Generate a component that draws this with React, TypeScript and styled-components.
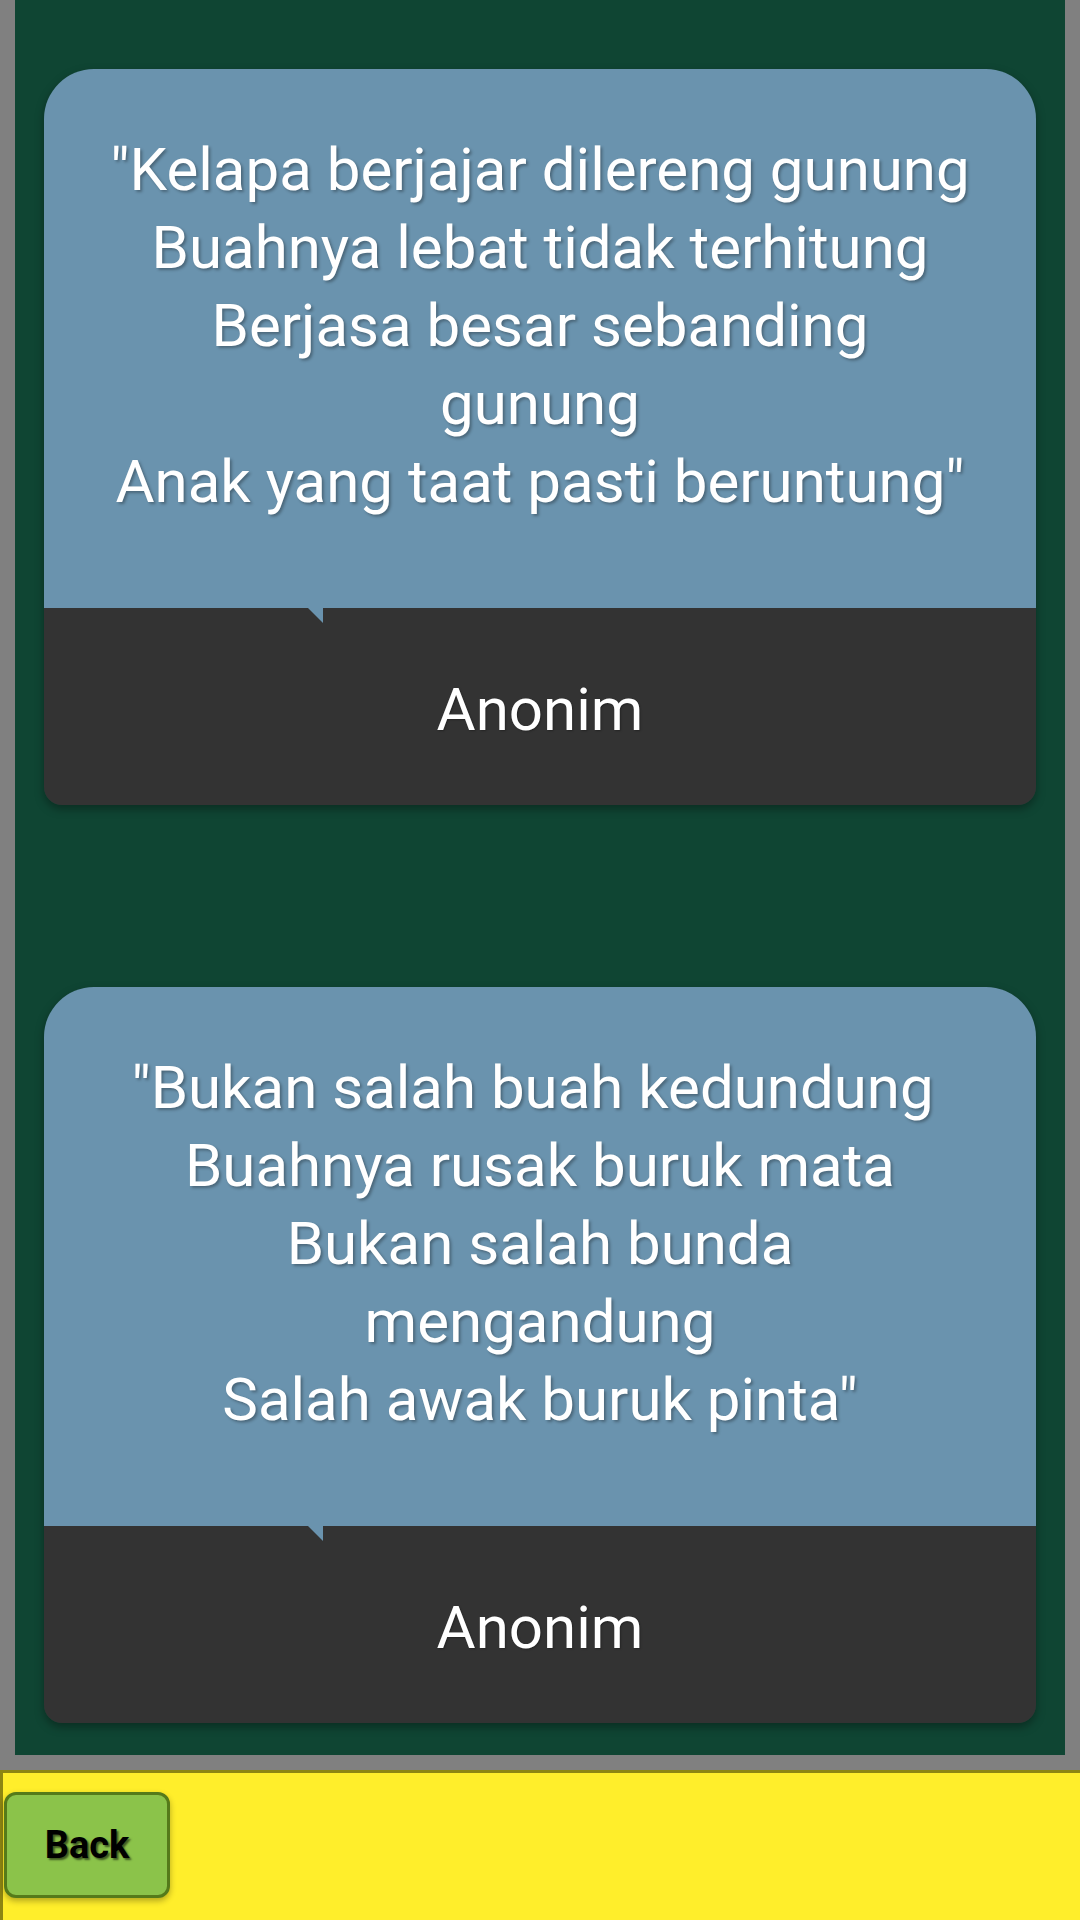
import styled, { createGlobalStyle } from "styled-components";

const GlobalStyle = createGlobalStyle`
  html, body {
    margin: 0;
    padding: 0;
    background: #808080;
    font-family: Roboto, "Liberation Sans", sans-serif;
  }
`;

const Page = styled.div`
  display: flex;
  flex-direction: column;
  width: 1080px;
  min-height: 1920px;
`;

const Panel = styled.div`
  margin: 0 15px;
  height: 1755px;
  box-sizing: border-box;
  background: #0f4533;
  padding: 69px 29px 31px;
  display: flex;
  flex-direction: column;
  gap: 182px;
`;

const Card = styled.div`
  display: flex;
  flex-direction: column;
  border-radius: 50px 50px 18px 18px;
  box-shadow: 0 4px 10px rgba(0, 0, 0, 0.35);
`;

const Quote = styled.div`
  position: relative;
  height: 539px;
  box-sizing: border-box;
  background: #6a93ae;
  border-radius: 50px 50px 0 0;
  padding: 62px 20px 0;
  color: #ffffff;
  font-size: 60px;
  line-height: 78px;
  text-align: center;
  text-shadow: 2px 2px 3px rgba(0, 0, 0, 0.3);

  &::after {
    content: "";
    position: absolute;
    left: 264px;
    bottom: -15px;
    width: 15px;
    height: 15px;
    background: #6a93ae;
    clip-path: polygon(0 0, 100% 0, 100% 100%);
  }
`;

const Line = styled.div`
  white-space: pre;
`;

const Author = styled.div`
  height: 197px;
  background: #333333;
  border-radius: 0 0 18px 18px;
  display: flex;
  align-items: center;
  justify-content: center;
  color: #ffffff;
  font-size: 60px;
  padding-top: 6px;
  box-sizing: border-box;
  text-shadow: 1px 1px 2px rgba(0, 0, 0, 0.3);
`;

const Footer = styled.div`
  margin-top: 15px;
  height: 150px;
  box-sizing: border-box;
  background: #ffee2b;
  border-top: 3px solid #8d8612;
  border-left: 3px solid #8d8612;
  padding: 19px 0 0 1px;
`;

const BackButton = styled.button`
  width: 166px;
  height: 106px;
  background: #8bc34a;
  border: 3px solid #557a1a;
  border-radius: 12px;
  box-shadow: 0 3px 6px rgba(0, 0, 0, 0.3);
  font-family: Roboto, "Liberation Sans", sans-serif;
  font-weight: 700;
  font-size: 38px;
  color: #000000;
  text-shadow: 2px 2px 2px rgba(0, 0, 0, 0.55);
  padding: 0;
  cursor: pointer;
`;

// lines as they wrap on screen
const poems = [
  {
    lines: [
      '"Kelapa berjajar dilereng gunung',
      "Buahnya lebat tidak terhitung",
      "Berjasa besar sebanding",
      "gunung",
      'Anak yang taat pasti beruntung"',
    ],
    author: "Anonim",
  },
  {
    lines: [
      '"Bukan salah buah kedundung ',
      "Buahnya rusak buruk mata",
      "Bukan salah bunda",
      "mengandung",
      'Salah awak buruk pinta"',
    ],
    author: "Anonim",
  },
];

export default function App() {
  return (
    <Page>
      <GlobalStyle />
      <Panel>
        {poems.map((p, i) => (
          <Card key={i}>
            <Quote>
              {p.lines.map((l, j) => (
                <Line key={j}>{l}</Line>
              ))}
            </Quote>
            <Author>{p.author}</Author>
          </Card>
        ))}
      </Panel>
      <Footer>
        <BackButton>Back</BackButton>
      </Footer>
    </Page>
  );
}
